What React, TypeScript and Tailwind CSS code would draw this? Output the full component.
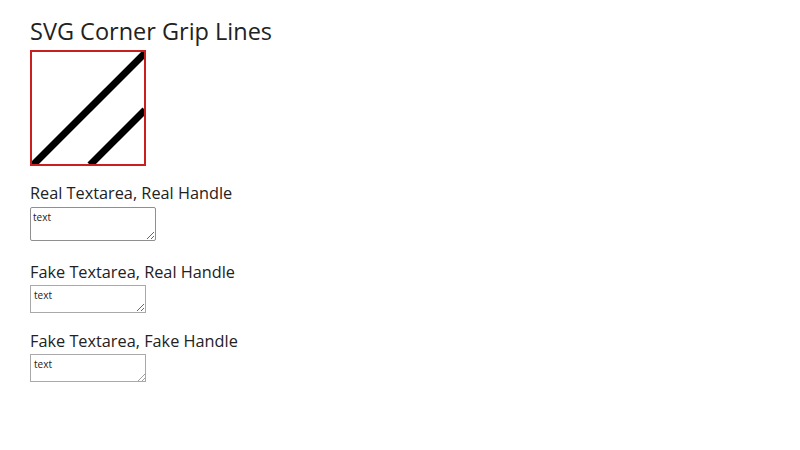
export default function App() {
  const font = { fontFamily: '"Open Sans", "Noto Sans", sans-serif' };
  return (
    <div className="w-[800px] h-[450px] bg-white text-[#222] pl-[30px] pt-[14px]" style={font}>
      <h1 className="text-[23.5px] leading-[34px] font-normal">SVG Corner Grip Lines</h1>
      <div className="mt-[2px] w-[116px] h-[116px] border-2 border-[#c8201f] overflow-hidden">
        <svg width="112" height="112" viewBox="0 0 112 112">
          <line x1="1" y1="113" x2="113" y2="1" stroke="black" strokeWidth="7" />
          <line x1="58" y1="113" x2="113" y2="58" stroke="black" strokeWidth="7" />
        </svg>
      </div>

      <h2 className="mt-[16px] text-[16.3px] leading-[23px]">Real Textarea, Real Handle</h2>
      <textarea
        defaultValue="text"
        className="block mt-[2px] w-[126px] h-[34px] border border-[#8f8f8f] rounded-[2px] text-[10px] leading-[12px] px-[2px] py-[3px] resize"
        style={{ fontFamily: '"Open Sans", sans-serif' }}
      />

      <h2 className="mt-[20px] text-[16.3px] leading-[23px]">Fake Textarea, Real Handle</h2>
      <div className="mt-[1px] w-[116px] h-[28px] border border-[#a9a9a9] text-[10px] leading-[12px] px-[3px] py-[3px] resize overflow-hidden">
        text
      </div>

      <h2 className="mt-[17px] text-[16.3px] leading-[23px]">Fake Textarea, Fake Handle</h2>
      <div className="relative mt-[1px] w-[116px] h-[28px] border border-[#a9a9a9] text-[10px] leading-[12px] px-[3px] py-[3px]">
        text
        <svg className="absolute right-0 bottom-0" width="8" height="8" viewBox="0 0 8 8">
          <line x1="1" y1="8" x2="8" y2="1" stroke="#a0a0a0" strokeWidth="1" />
          <line x1="5" y1="8" x2="8" y2="5" stroke="#a0a0a0" strokeWidth="1" />
        </svg>
      </div>
    </div>
  );
}
